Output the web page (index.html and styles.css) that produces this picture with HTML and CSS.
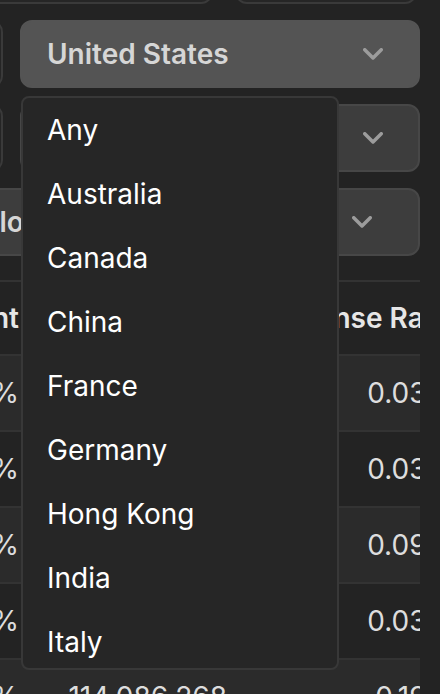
FILE: index.html
```html
<!DOCTYPE html>
<html lang="en">
<head>
<meta charset="utf-8">
<title>ETF Screener</title>
<link rel="stylesheet" href="styles.css">
</head>
<body>
<main class="sheet">
  <section class="filters">
    <div class="row row-top">
      <div class="field"></div>
      <div class="field field-narrow"></div>
    </div>

    <div class="row row-pair">
      <div class="field"></div>
      <div class="select-wrap">
        <div class="select is-open" role="combobox" aria-expanded="true">
          <span class="select-value">United States</span>
          <svg class="chevron" viewBox="0 0 20 12" aria-hidden="true"><path d="M1.75 1.75 L10 10 L18.25 1.75"/></svg>
        </div>
        <ul class="menu" role="listbox">
          <li>Any</li>
          <li>Australia</li>
          <li>Canada</li>
          <li>China</li>
          <li>France</li>
          <li>Germany</li>
          <li>Hong Kong</li>
          <li>India</li>
          <li>Italy</li>
          <li>Japan</li>
          <li>United Kingdom</li>
          <li>United States</li>
        </ul>
      </div>
    </div>

    <div class="row row-pair">
      <div class="field"></div>
      <div class="select" role="combobox">
        <span class="select-value">Any</span>
        <svg class="chevron" viewBox="0 0 20 12" aria-hidden="true"><path d="M1.75 1.75 L10 10 L18.25 1.75"/></svg>
      </div>
    </div>

    <div class="row">
      <div class="select select-wide" role="combobox">
        <span class="select-value">Region: Global</span>
        <svg class="chevron" viewBox="0 0 20 12" aria-hidden="true"><path d="M1.75 1.75 L10 10 L18.25 1.75"/></svg>
      </div>
    </div>
  </section>

  <section class="table-wrap">
    <div class="tr thead">
      <div class="td num">Change Percent</div>
      <div class="td num">Volume</div>
      <div class="td num">Expense Ratio</div>
    </div>
    <div class="tr">
      <div class="td num">0.52%</div>
      <div class="td num">52,318,904</div>
      <div class="td num">0.03%</div>
    </div>
    <div class="tr">
      <div class="td num">0.49%</div>
      <div class="td num">4,902,177</div>
      <div class="td num">0.03%</div>
    </div>
    <div class="tr">
      <div class="td num">0.51%</div>
      <div class="td num">61,447,035</div>
      <div class="td num">0.09%</div>
    </div>
    <div class="tr">
      <div class="td num">0.47%</div>
      <div class="td num">3,771,520</div>
      <div class="td num">0.03%</div>
    </div>
    <div class="tr">
      <div class="td num">0.84%</div>
      <div class="td num">114,086,268</div>
      <div class="td num">0.19%</div>
    </div>
  </section>
</main>
</body>
</html>
```

FILE: styles.css
```css
* {
  box-sizing: border-box;
}

html,
body {
  margin: 0;
  padding: 0;
}

body {
  width: 440px;
  height: 694px;
  overflow: hidden;
  background: #232323;
  color: #dddddd;
  font-family: Inter, "Noto Sans", sans-serif;
}

.sheet {
  width: 600px;
  margin: -64px 0 0 -180px;
}

/* ---------- filter controls ---------- */

.filters {
  display: flex;
  flex-direction: column;
  gap: 16px;
}

.row-top {
  display: flex;
  gap: 22px;
  padding-right: 3px;
}

.row-top .field {
  flex: 1;
}

.row-top .field-narrow {
  flex: 0 0 182px;
}

.row-pair {
  display: grid;
  grid-template-columns: 1fr 400px;
  gap: 17px;
}

.field {
  height: 68px;
  border: 2px solid #3a3a3a;
  border-radius: 12px;
  background: #262626;
}

.select {
  height: 68px;
  display: flex;
  align-items: center;
  justify-content: space-between;
  padding: 0 35px 0 25px;
  border: 2px solid #474747;
  border-radius: 12px;
  background: #3d3d3d;
  color: #d6d6d6;
  font-size: 28px;
  font-weight: 600;
  white-space: nowrap;
}

.select.is-open {
  background: #545454;
  border-color: #545454;
}

.select-wide {
  padding: 0 46px 0 47px;
}

.chevron {
  width: 20px;
  height: 12px;
  flex: none;
  fill: none;
  stroke: #9c9c9c;
  stroke-width: 3.5;
  stroke-linecap: round;
  stroke-linejoin: round;
}

/* ---------- country dropdown ---------- */

.select-wrap {
  position: relative;
}

.menu {
  position: absolute;
  top: 76px;
  left: 1px;
  z-index: 2;
  width: 318px;
  height: 574px;
  margin: 0;
  padding: 0;
  list-style: none;
  overflow: hidden;
  background: #262626;
  border: 2px solid #383838;
  border-radius: 8px;
}

.menu li {
  height: 64px;
  display: flex;
  align-items: center;
  padding-left: 24px;
  color: #ffffff;
  font-size: 28px;
  font-weight: 400;
  white-space: nowrap;
}

/* ---------- results table ---------- */

.table-wrap {
  margin-top: 24px;
  overflow: hidden;
}

.tr {
  display: grid;
  grid-template-columns: 215px 208px 227px;
  align-items: center;
  height: 76px;
  border-bottom: 2px solid #333333;
  font-size: 28px;
  color: #dddddd;
}

.tr:nth-child(even) {
  background: #2b2b2b;
}

.thead {
  border-top: 2px solid #333333;
  font-weight: 600;
  color: #e6e6e6;
}

.thead .td:last-child {
  padding-right: 12px;
}

.td {
  padding: 0 16px;
  white-space: nowrap;
  min-width: 0;
}

/* numeric columns hug the right edge, even when a header is wider than its cell */
.num {
  display: flex;
  justify-content: flex-end;
}
```
